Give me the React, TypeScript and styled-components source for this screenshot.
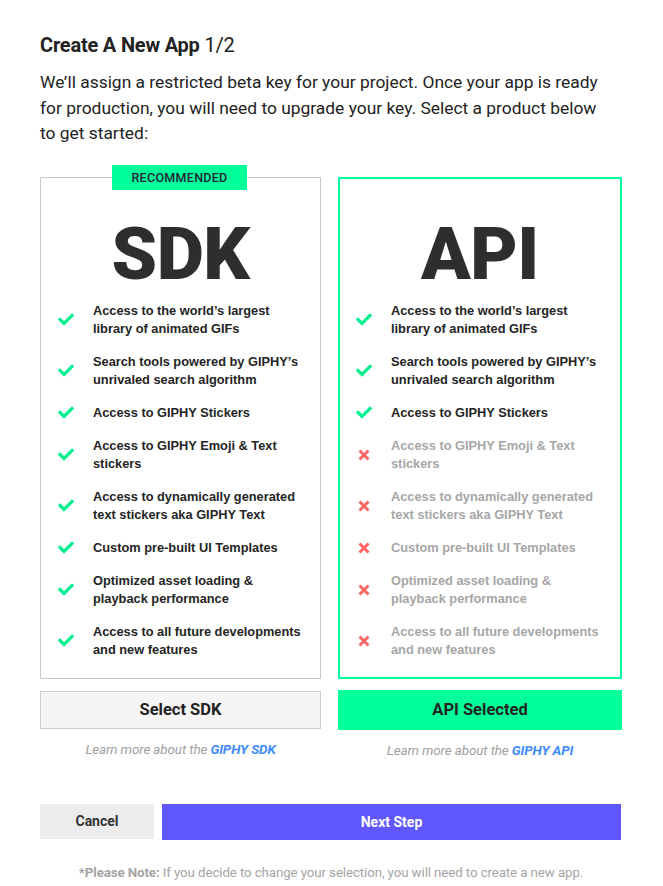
import React from 'react'
import styled, { createGlobalStyle } from 'styled-components'

const GlobalStyle = createGlobalStyle`
  html, body {
    margin: 0;
    padding: 0;
    background: #ffffff;
  }
  body {
    font-family: Roboto, 'Liberation Sans', sans-serif;
    color: #222;
  }
`

const Page = styled.div`
  width: 663px;
  box-sizing: border-box;
  padding: 34px 41px 0 40px;
`

const Title = styled.h1`
  margin: 0;
  font-size: 20px;
  font-weight: 700;
  line-height: 22px;
  color: #222;
  letter-spacing: -0.2px;

  span {
    font-weight: 400;
  }
`

const Intro = styled.p`
  margin: 14px 0 0;
  max-width: 570px;
  font-size: 17.4px;
  line-height: 25.5px;
  color: #222;
`

const Products = styled.div`
  display: grid;
  grid-template-columns: 281px 284px;
  column-gap: 17px;
  margin-top: 30px;
`

const Column = styled.div`
  display: flex;
  flex-direction: column;
`

const Card = styled.div<{ $selected?: boolean }>`
  position: relative;
  height: 502px;
  box-sizing: border-box;
  border: ${(p) => (p.$selected ? '2px solid #00ff99' : '1px solid #c8c8c8')};
  padding-top: ${(p) => (p.$selected ? '37px' : '38px')};
  padding-left: ${(p) => (p.$selected ? '15px' : '16px')};
  display: flex;
  flex-direction: column;
`

const Badge = styled.div`
  position: absolute;
  top: -13px;
  left: 71px;
  width: 135px;
  height: 25px;
  background: #00ff99;
  color: #23233a;
  font-size: 12.5px;
  font-weight: 500;
  letter-spacing: 0.3px;
  display: flex;
  align-items: center;
  justify-content: center;
`

const ProductName = styled.div<{ $inset: number }>`
  margin-left: -${(p) => p.$inset}px;
  text-align: center;
  font-family: Roboto, sans-serif;
  font-size: 73px;
  font-weight: 900;
  line-height: 76px;
  color: #2e2e2e;
  letter-spacing: -0.5px;
  margin-bottom: 10px;
`

const Features = styled.ul`
  list-style: none;
  margin: 0;
  padding: 0;
  display: flex;
  flex-direction: column;
  gap: 15px;
`

const Feature = styled.li<{ $off?: boolean }>`
  display: flex;
  align-items: center;
  gap: 19px;
  font-family: 'Liberation Sans', Arial, sans-serif;
  font-size: 12.8px;
  font-weight: 700;
  line-height: 18px;
  white-space: nowrap;
  color: ${(p) => (p.$off ? '#a6a6a6' : '#242424')};
`

const IconBox = styled.span`
  width: 17px;
  flex: 0 0 17px;
  display: flex;
  justify-content: center;
`

const SelectButton = styled.button<{ $selected?: boolean }>`
  margin-top: ${(p) => (p.$selected ? '11px' : '12px')};
  height: ${(p) => (p.$selected ? '40px' : '38px')};
  box-sizing: border-box;
  border: ${(p) => (p.$selected ? 'none' : '1px solid #cccccc')};
  background: ${(p) => (p.$selected ? '#00ff99' : '#f5f5f5')};
  font-family: Roboto, sans-serif;
  font-size: 16.5px;
  font-weight: 700;
  color: #222;
  cursor: pointer;
`

const LearnMore = styled.div`
  margin-top: 13px;
  text-align: center;
  font-size: 13.4px;
  font-style: italic;
  color: #a0a0a0;
  letter-spacing: -0.1px;

  a {
    color: #3d8bff;
    font-weight: 700;
    text-decoration: none;
  }
`

const Actions = styled.div`
  display: flex;
  gap: 8px;
  margin-top: 46px;
  margin-right: 1px;
`

const CancelButton = styled.button`
  width: 114px;
  height: 35px;
  border: none;
  background: #ececec;
  font-family: Roboto, sans-serif;
  font-size: 14px;
  font-weight: 700;
  color: #333;
`

const NextButton = styled.button`
  flex: 1;
  height: 36px;
  border: none;
  background: #6157ff;
  font-family: Roboto, sans-serif;
  font-size: 14px;
  font-weight: 700;
  color: #fff;
`

const Note = styled.p`
  margin: 25px 0 0;
  text-align: center;
  font-size: 13.3px;
  color: #a5a5a5;
  letter-spacing: -0.1px;

  b {
    font-weight: 700;
  }
`

const Check = () => (
  <svg width="16" height="13" viewBox="0 0 16 13">
    <path d="M2 6.5 L6 10.5 L14 2.5" fill="none" stroke="#00f08f" strokeWidth="3.2" strokeLinecap="square" />
  </svg>
)

const Cross = () => (
  <svg width="12" height="12" viewBox="0 0 12 12">
    <path d="M1.5 1.5 L10.5 10.5 M10.5 1.5 L1.5 10.5" fill="none" stroke="#ff6666" strokeWidth="3" />
  </svg>
)

const features: React.ReactNode[] = [
  <>Access to the world’s largest<br />library of animated GIFs</>,
  <>Search tools powered by GIPHY’s<br />unrivaled search algorithm</>,
  'Access to GIPHY Stickers',
  <>Access to GIPHY Emoji &amp; Text<br />stickers</>,
  <>Access to dynamically generated<br />text stickers aka GIPHY Text</>,
  'Custom pre-built UI Templates',
  <>Optimized asset loading &amp;<br />playback performance</>,
  <>Access to all future developments<br />and new features</>,
]

const FeatureList = ({ available }: { available: number }) => (
  <Features>
    {features.map((f, i) => {
      const off = i >= available
      return (
        <Feature key={i} $off={off}>
          <IconBox>{off ? <Cross /> : <Check />}</IconBox>
          <span>{f}</span>
        </Feature>
      )
    })}
  </Features>
)

export default function App() {
  return (
    <>
      <GlobalStyle />
      <Page>
        <Title>
          Create A New App <span>1/2</span>
        </Title>
        <Intro>
          We’ll assign a restricted beta key for your project. Once your app is ready for production, you will need
          to upgrade your key. Select a product below to get started:
        </Intro>
        <Products>
          <Column>
            <Card>
              <Badge>RECOMMENDED</Badge>
              <ProductName $inset={16}>SDK</ProductName>
              <FeatureList available={8} />
            </Card>
            <SelectButton>Select SDK</SelectButton>
            <LearnMore>
              Learn more about the <a href="#">GIPHY SDK</a>
            </LearnMore>
          </Column>
          <Column>
            <Card $selected>
              <ProductName $inset={15}>API</ProductName>
              <FeatureList available={3} />
            </Card>
            <SelectButton $selected>API Selected</SelectButton>
            <LearnMore>
              Learn more about the <a href="#">GIPHY API</a>
            </LearnMore>
          </Column>
        </Products>
        <Actions>
          <CancelButton>Cancel</CancelButton>
          <NextButton>Next Step</NextButton>
        </Actions>
        <Note>
          <b>*Please Note:</b> If you decide to change your selection, you will need to create a new app.
        </Note>
      </Page>
    </>
  )
}
